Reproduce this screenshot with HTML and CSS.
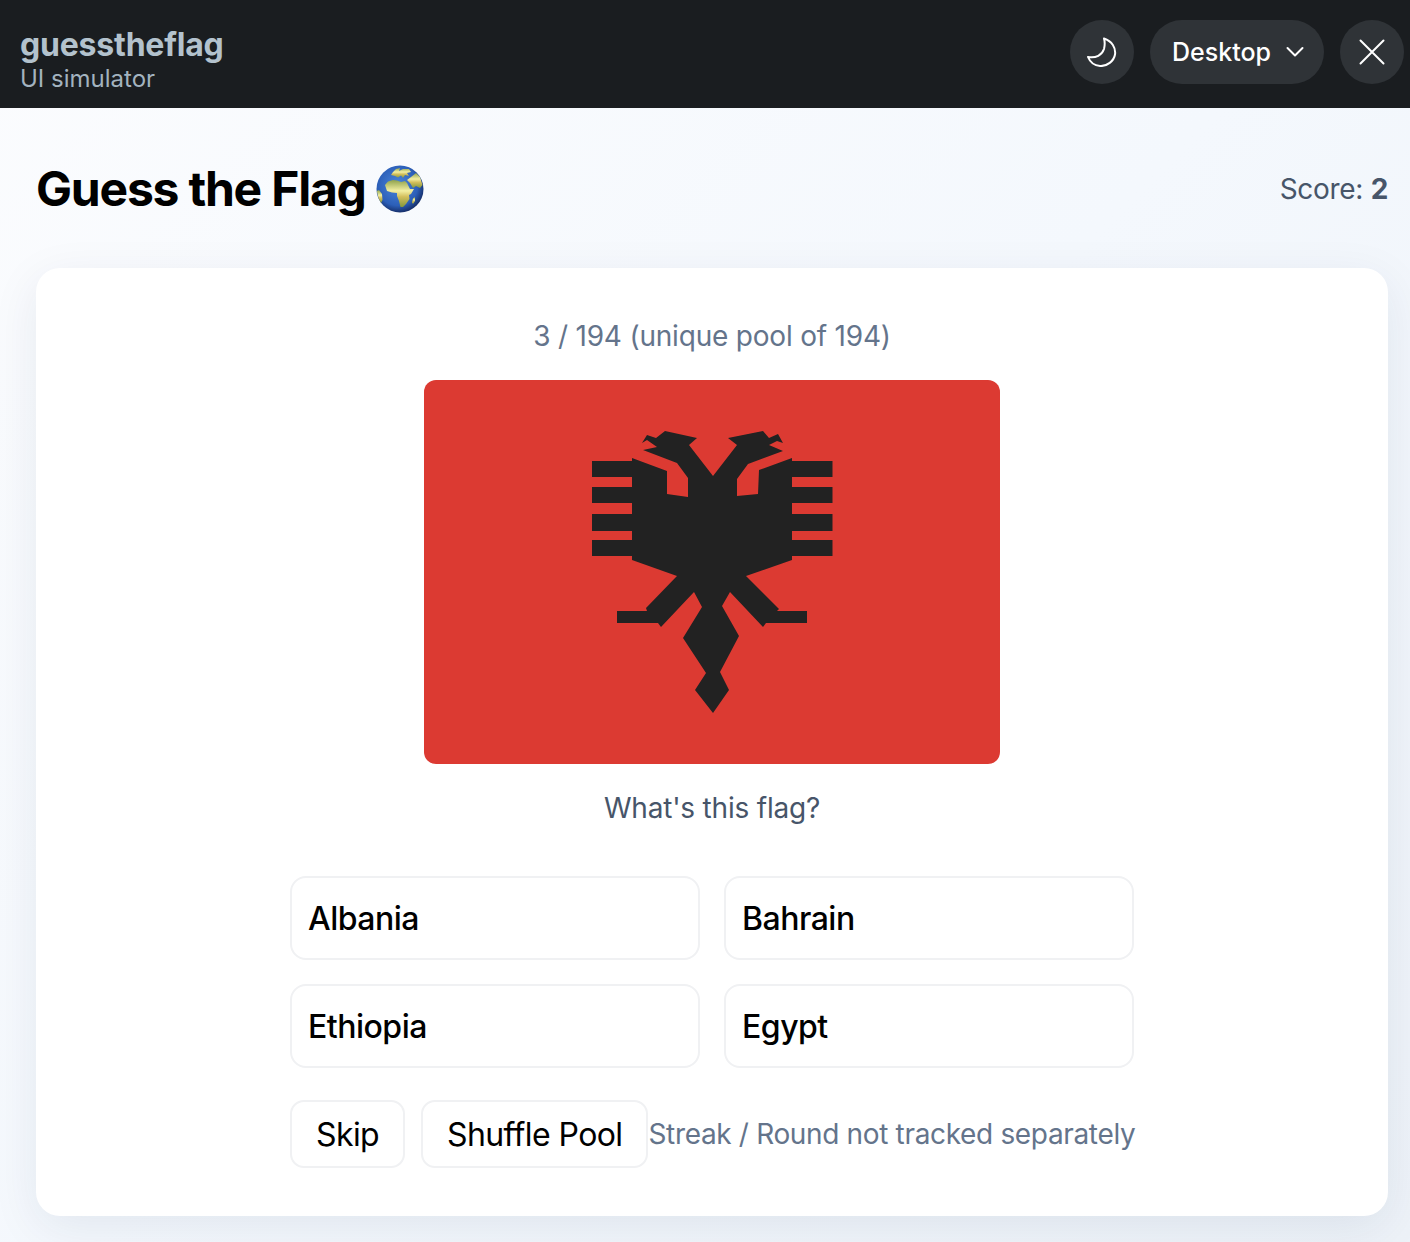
FILE: index.html
```html
<!DOCTYPE html>
<html>

<head>
  <title>Guess the Flag</title>
  <link rel="stylesheet" href="styles.css">
</head>

<body>
  <header class="topbar">
    <div class="app-name">
      <div class="app-title">guesstheflag</div>
      <div class="app-sub">UI simulator</div>
    </div>
    <div class="topbar-actions">
      <button class="round-btn" aria-label="Theme">
        <svg width="30" height="30" viewBox="0 0 30 30" fill="none" stroke="#fff" stroke-width="2" stroke-linejoin="round">
          <path d="M17 1.500C25 4 29 11 28 17.500C27 24 20 29.500 13 29C7.500 28.500 3 25 1 20C9 21.500 15 18 17 12C18 8 18 5 17 1.500Z" />
        </svg>
      </button>
      <button class="device-btn">
        <span>Desktop</span>
        <svg width="18" height="12" viewBox="0 0 18 12" fill="none" stroke="#fff" stroke-width="2" stroke-linecap="round" stroke-linejoin="round">
          <path d="M1.500 2L9 9.500L16.500 2" />
        </svg>
      </button>
      <button class="round-btn" aria-label="Close">
        <svg width="26" height="26" viewBox="0 0 26 26" fill="none" stroke="#fff" stroke-width="2" stroke-linecap="round">
          <path d="M1.500 1.500L24.500 24.500M24.500 1.500L1.500 24.500" />
        </svg>
      </button>
    </div>
  </header>

  <main class="page">
    <div class="page-head">
      <h1 class="page-title">
        Guess the Flag
        <svg class="globe" width="48" height="48" viewBox="0 0 48 48">
          <defs>
            <radialGradient id="sea" cx="45%" cy="42%" r="60%">
              <stop offset="0" stop-color="#4a86dc" />
              <stop offset="0.72" stop-color="#2c5fb8" />
              <stop offset="1" stop-color="#142a62" />
            </radialGradient>
            <linearGradient id="land" x1="0" y1="0" x2="0" y2="1">
              <stop offset="0" stop-color="#8fa24c" />
              <stop offset="0.4" stop-color="#f3efa2" />
              <stop offset="0.62" stop-color="#d3bf5c" />
              <stop offset="1" stop-color="#83983c" />
            </linearGradient>
          </defs>
          <circle cx="24" cy="24" r="23.500" fill="url(#sea)" />
          <g fill="url(#land)">
            <path d="M17 7L20 4L24 3L23 6L27 4L33 4L35 7L31 8L33 11L29 10L27 13L25 10.500L22 12.500L19 11L15 10Z" />
            <path d="M9 20L12 16.500L17 15L21 15.500L25 17L29 16L31 18L34 24L38 24L35 29L33 30L33.500 34L30 39L27 42L24.500 42L23 36L21 31L21 28L16 27.500L11 26Z" />
            <path d="M31 15L35 12L40 8L44 12L46.500 20L44 23L40 21L37 23L34 18Z" />
            <path d="M0.800 26L3 25L6 29L6.500 35L5 38L2.500 33Z" />
            <path d="M37 33.500L39 32L39 36L37 39L36 37.500Z" />
          </g>
        </svg>
      </h1>
      <div class="score">Score: <strong>2</strong></div>
    </div>

    <section class="card">
      <div class="progress">3 / 194 (unique pool of 194)</div>

      <svg class="flag" viewBox="424 380 576 384">
        <rect x="424" y="380" width="576" height="384" fill="#dc3a32" />
        <g fill="#222">
          <path d="M592 461H633V477H592ZM592 487H633V503H592ZM592 514H633V531H592ZM592 540H633V556H592Z" />
          <path d="M792 461H832.500V477H792ZM792 487H832.500V503H792ZM792 514H832.500V531H792ZM792 540H832.500V556H792Z" />
          <path d="M632 458L667 471L667 494L688 497L688 478L677 463L643 450L657 447L647 440L642 443L647 435L656 438L665 431L697 438L689 445L713 476L737 445L728 438L763 431L769 438L778 434L783 443L777 441L769 445L783 451L748 464L737 479L737 496L758 494L759 470L792 458L792 560L746 576L779 609L777 611L807 611L807 623L766 623L763 627L730 592L722 606L739 636L720 672L729 690L713 713L695 690L706 673L683 638L702 607L694 592L661 627L658 623L617 623L617 611L647 611L646 608L677 576L632 560Z" />
        </g>
      </svg>

      <div class="question">What's this flag?</div>

      <div class="options">
        <button class="option">Albania</button>
        <button class="option">Bahrain</button>
        <button class="option">Ethiopia</button>
        <button class="option">Egypt</button>
      </div>

      <div class="actions">
        <div class="action-btns">
          <button class="action">Skip</button>
          <button class="action">Shuffle Pool</button>
        </div>
        <div class="note">Streak / Round not tracked separately</div>
      </div>
    </section>
  </main>
</body>

</html>
```

FILE: styles.css
```css
* {
  box-sizing: border-box;
}

html,
body {
  margin: 0;
  padding: 0;
  height: 100%;
  overflow: hidden;
}

body {
  font-family: Inter, "Liberation Sans", sans-serif;
  background: linear-gradient(135deg, #fbfcfe 0%, #f4f8fd 50%, #edf2f8 100%);
  color: #000;
}

button {
  font-family: inherit;
  cursor: pointer;
}

.topbar {
  display: flex;
  align-items: center;
  justify-content: space-between;
  height: 108px;
  padding: 0 6px 4px 20px;
  background-color: #1a1d20;
}

.app-name {
  padding-top: 16px;
}

.app-title {
  font-size: 32px;
  font-weight: 700;
  line-height: 38px;
  letter-spacing: -0.2px;
  color: #b3c2cd;
}

.app-sub {
  font-size: 24px;
  line-height: 30px;
  color: #a3b3bf;
}

.topbar-actions {
  display: flex;
  align-items: center;
  gap: 16px;
}

.round-btn {
  display: flex;
  align-items: center;
  justify-content: center;
  width: 64px;
  height: 64px;
  padding: 0;
  border: 0;
  border-radius: 50%;
  background-color: #2f3337;
}

.device-btn {
  display: flex;
  align-items: center;
  gap: 15px;
  height: 64px;
  padding: 0 20px 0 22px;
  border: 0;
  border-radius: 32px;
  background-color: #2f3337;
  color: #fff;
  font-size: 25px;
  font-weight: 500;
}

.page {
  padding: 53px 22px 26px 36px;
}

.page-head {
  display: flex;
  align-items: center;
  justify-content: space-between;
  height: 56px;
  margin-bottom: 51px;
}

.page-title {
  display: flex;
  align-items: center;
  gap: 10px;
  margin: 0;
  font-size: 48px;
  font-weight: 700;
  line-height: 56px;
  letter-spacing: -1.2px;
}

.score {
  font-size: 28px;
  letter-spacing: -0.3px;
  color: #475569;
}

.score strong {
  font-weight: 700;
}

.card {
  display: flex;
  flex-direction: column;
  align-items: center;
  height: 948px;
  padding: 48px 0;
  background-color: #fff;
  border-radius: 24px;
  box-shadow: 0 12px 48px rgba(15, 40, 80, 0.08);
}

.progress {
  font-size: 28px;
  line-height: 40px;
  letter-spacing: -0.2px;
  color: #64748b;
}

.flag {
  display: block;
  width: 576px;
  height: 384px;
  margin-top: 24px;
  border-radius: 12px;
}

.question {
  margin-top: 24px;
  font-size: 28px;
  line-height: 40px;
  letter-spacing: -0.2px;
  color: #475569;
}

.options {
  display: grid;
  grid-template-columns: 410px 410px;
  gap: 24px;
  margin-top: 48px;
}

.option {
  height: 84px;
  padding: 0 16px;
  border: 2px solid #f0f1f3;
  border-radius: 16px;
  background-color: #fff;
  color: #000;
  font-size: 32px;
  font-weight: 500;
  letter-spacing: -0.5px;
  text-align: left;
}

.actions {
  display: flex;
  align-items: center;
  justify-content: space-between;
  width: 844px;
  margin-top: 32px;
}

.action-btns {
  display: flex;
  flex-shrink: 0;
  gap: 16px;
}

.action {
  height: 68px;
  padding: 0 24px;
  border: 2px solid #f0f1f3;
  border-radius: 14px;
  background-color: #fff;
  color: #000;
  font-size: 32px;
  letter-spacing: -0.6px;
  white-space: nowrap;
}

.note {
  font-size: 28px;
  letter-spacing: -0.34px;
  white-space: nowrap;
  color: #64748b;
}
```
